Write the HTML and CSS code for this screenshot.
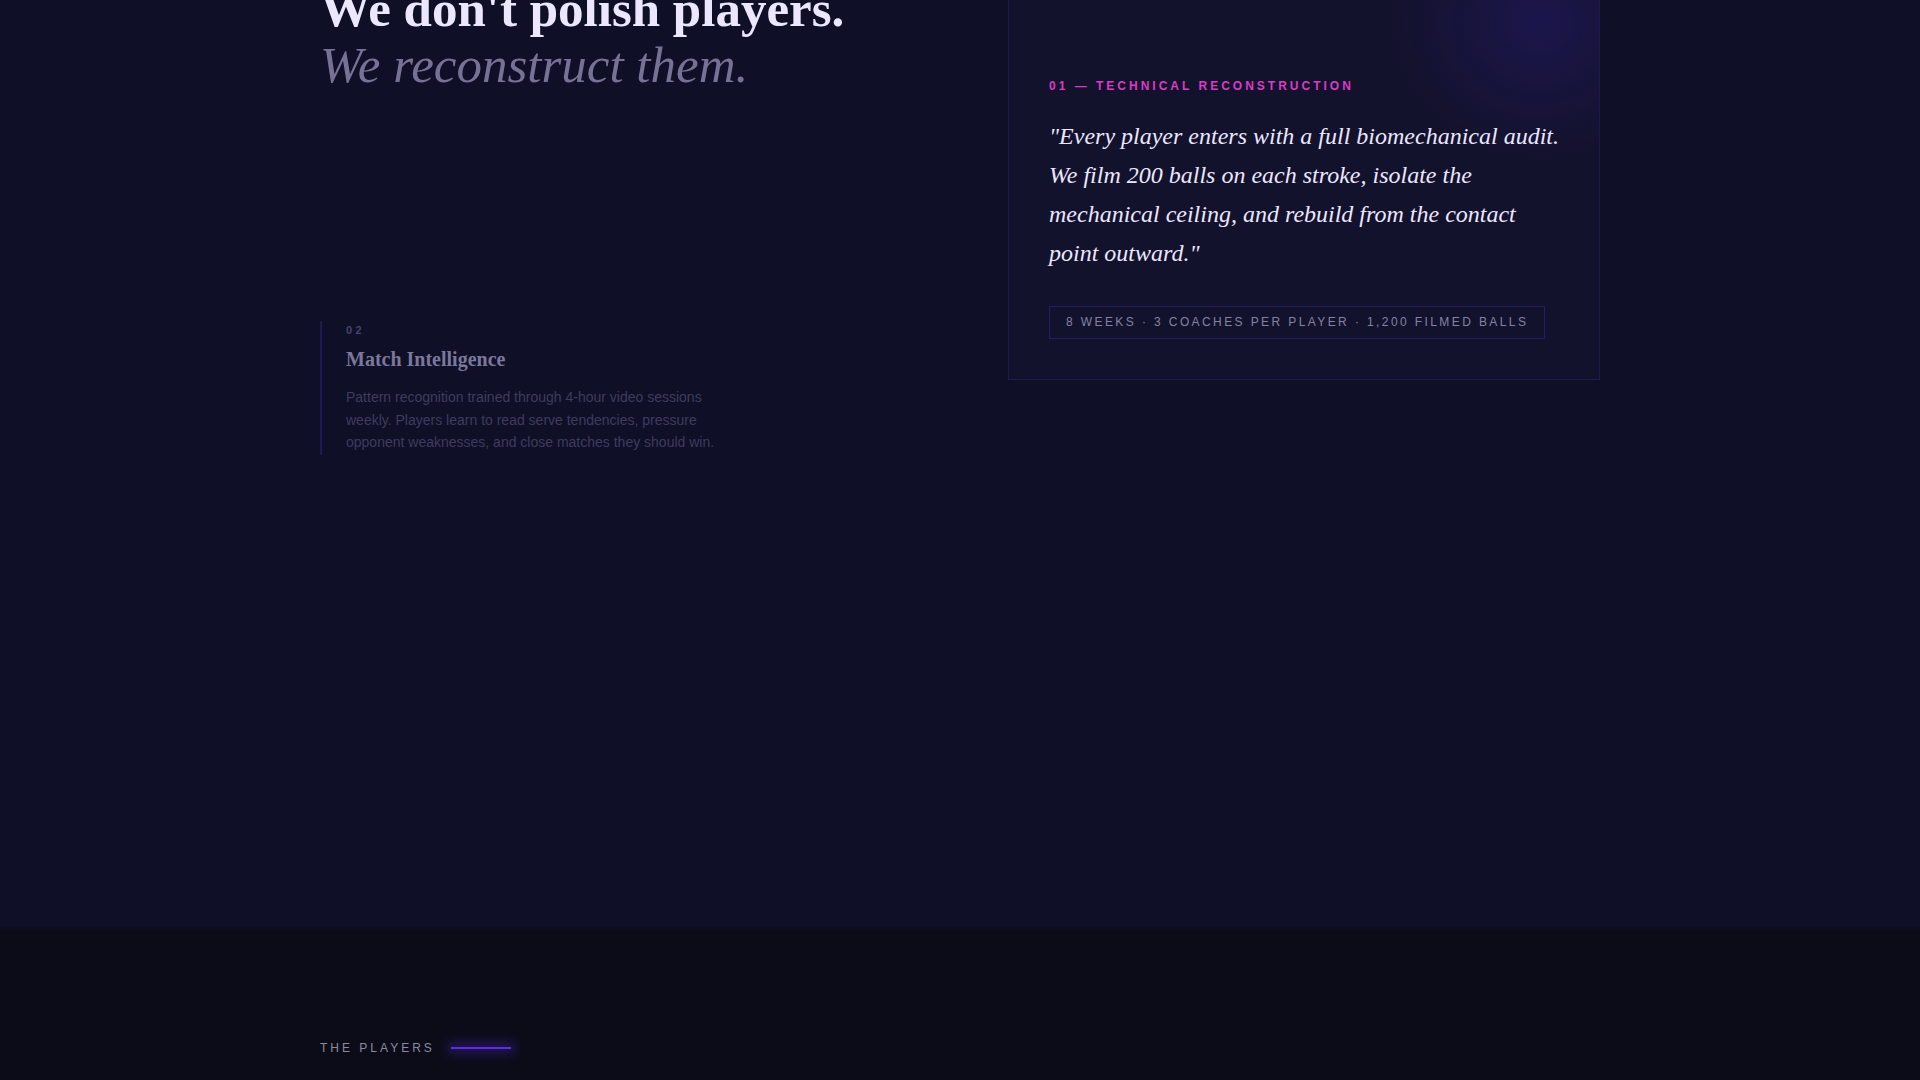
FILE: index.html
```html
<!DOCTYPE html>
<html lang="en">
<head>
<meta charset="utf-8">
<title>Method — We reconstruct them</title>
<link rel="stylesheet" href="styles.css">
</head>
<body>
<section class="method">
  <div class="method-grid">
    <div class="method-intro">
      <h2 class="headline">
        <span class="headline-main">We don't polish players.</span>
        <em class="headline-sub">We reconstruct them.</em>
      </h2>
      <ul class="pillars">
        <li class="pillar">
          <span class="pillar-num">02</span>
          <h3 class="pillar-title">Match Intelligence</h3>
          <p class="pillar-text">Pattern recognition trained through 4-hour video sessions weekly. Players learn to read serve tendencies, pressure opponent weaknesses, and close matches they should win.</p>
        </li>
      </ul>
    </div>
    <article class="focus-card">
      <p class="focus-label">01 — Technical Reconstruction</p>
      <blockquote class="focus-quote">"Every player enters with a full biomechanical audit. We film 200 balls on each stroke, isolate the mechanical ceiling, and rebuild from the contact point outward."</blockquote>
      <div class="focus-stats">8 weeks · 3 coaches per player · 1,200 filmed balls</div>
    </article>
  </div>
</section>
<section class="players">
  <div class="players-inner">
    <div class="eyebrow">
      <span class="eyebrow-text">The Players</span>
      <span class="eyebrow-line"></span>
    </div>
  </div>
</section>
</body>
</html>
```
FILE: styles.css
```css
* { box-sizing: border-box; }

html, body {
  margin: 0;
  padding: 0;
  background: #0c0c18;
  overflow: hidden;
}

body {
  font-family: "Liberation Sans", Arial, sans-serif;
  color: #e9e5ff;
}

.method {
  background: #0f0f27;
  padding: 0 0 471px;
}

.method-grid {
  width: 1280px;
  margin: -19px auto 0;
  display: grid;
  grid-template-columns: 592px 592px;
  column-gap: 96px;
  align-items: start;
}

.headline {
  margin: 0;
  font-family: "Liberation Serif", "Times New Roman", serif;
  font-size: 51px;
  line-height: 1.1;
  font-weight: 700;
}

.headline-main {
  display: block;
  color: #ebe7ff;
}

.headline-sub {
  display: block;
  font-style: italic;
  font-weight: 400;
  color: #767296;
}

.pillars {
  list-style: none;
  margin: 228px 0 0;
  padding: 0;
}

.pillar {
  border-left: 2px solid #1c1a52;
  padding: 3px 0 1px 24px;
}

.pillar-num {
  display: block;
  font-size: 11px;
  line-height: 1.2;
  font-weight: 700;
  letter-spacing: 0.3em;
  color: #464469;
  margin-bottom: 10px;
}

.pillar-title {
  margin: 0 0 15px;
  font-family: "Liberation Serif", "Times New Roman", serif;
  font-size: 20px;
  line-height: 1.2;
  font-weight: 700;
  color: #7a789b;
}

.pillar-text {
  margin: 0;
  max-width: 380px;
  font-size: 14px;
  line-height: 1.6;
  color: #3e3c5e;
}

.focus-card {
  border: 1px solid #1c1a4c;
  background:
    radial-gradient(ellipse 150px 140px at 530px 40px, rgba(58, 38, 200, 0.2), rgba(58, 38, 200, 0) 100%),
    #13122c;
  padding: 97px 40px 40px;
}

.focus-label {
  margin: 0 0 24px;
  font-size: 12px;
  line-height: 1.2;
  font-weight: 700;
  letter-spacing: 0.25em;
  text-transform: uppercase;
  color: #d93cc6;
}

.focus-quote {
  margin: 0;
  font-family: "Liberation Serif", "Times New Roman", serif;
  font-style: italic;
  font-size: 24px;
  line-height: 1.625;
  color: #ebe7ff;
}

.focus-stats {
  display: inline-block;
  margin-top: 33px;
  border: 1px solid #221e66;
  padding: 8px 16px;
  font-size: 12px;
  line-height: 15px;
  letter-spacing: 0.2em;
  text-transform: uppercase;
  color: #8482a4;
}

.players {
  background: linear-gradient(to bottom, #0e0e25 0, #0c0c18 6px, #0c0c18 100%);
  height: 153px;
  padding-top: 115px;
}

.players-inner {
  width: 1280px;
  margin: 0 auto;
}

.eyebrow {
  display: flex;
  align-items: center;
  gap: 16px;
}

.eyebrow-text {
  font-size: 12px;
  line-height: 1.2;
  letter-spacing: 0.25em;
  text-transform: uppercase;
  color: #8c8aa3;
}

.eyebrow-line {
  width: 60px;
  height: 2px;
  background: #5a2ee6;
  box-shadow: 0 0 12px 3px rgba(90, 46, 230, 0.45);
}
```
